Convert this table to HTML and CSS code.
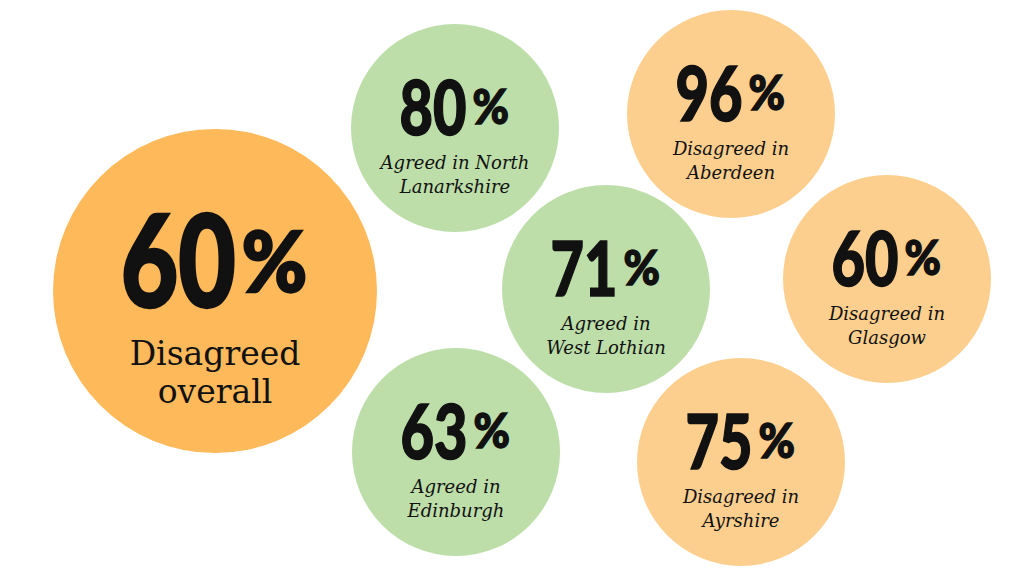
FILE: index.html
```html
<!DOCTYPE html>
<html lang="en">
<head>
<meta charset="utf-8">
<title>Survey results</title>
<link rel="stylesheet" href="styles.css">
</head>
<body>
<div class="stage">
  <div class="bubble big orange b-overall">
    <div class="num"><span class="digits">60</span><span class="pct">%</span></div>
    <div class="label label-big">Disagreed<br>overall</div>
  </div>

  <div class="bubble green b-north">
    <div class="num"><span class="digits">80</span><span class="pct">%</span></div>
    <div class="label">Agreed in North<br>Lanarkshire</div>
  </div>

  <div class="bubble peach b-aberdeen">
    <div class="num"><span class="digits">96</span><span class="pct">%</span></div>
    <div class="label">Disagreed in<br>Aberdeen</div>
  </div>

  <div class="bubble green b-west">
    <div class="num"><span class="digits">71</span><span class="pct">%</span></div>
    <div class="label">Agreed in<br>West Lothian</div>
  </div>

  <div class="bubble peach b-glasgow">
    <div class="num"><span class="digits">60</span><span class="pct">%</span></div>
    <div class="label">Disagreed in<br>Glasgow</div>
  </div>

  <div class="bubble green b-edinburgh">
    <div class="num"><span class="digits">63</span><span class="pct">%</span></div>
    <div class="label">Agreed in<br>Edinburgh</div>
  </div>

  <div class="bubble peach b-ayrshire">
    <div class="num"><span class="digits">75</span><span class="pct">%</span></div>
    <div class="label">Disagreed in<br>Ayrshire</div>
  </div>
</div>
</body>
</html>
```

FILE: styles.css
```css
html, body {
  margin: 0;
  padding: 0;
  background: #ffffff;
}

.stage {
  position: relative;
  width: 1024px;
  height: 576px;
  overflow: hidden;
  background: #ffffff;
  color: #111111;
}

.bubble {
  position: absolute;
  width: 208px;
  height: 208px;
  border-radius: 50%;
  display: flex;
  flex-direction: column;
  align-items: center;
  justify-content: center;
  text-align: center;
  box-sizing: border-box;
  padding-top: 10px;
}

.orange { background: #fdb95a; }
.peach  { background: #fccf8e; }
.green  { background: #bddea9; }

.big {
  width: 324px;
  height: 324px;
  padding-top: 23px;
}

.b-overall   { left: 53px;  top: 129px; }
.b-north     { left: 351px; top: 24px; }
.b-aberdeen  { left: 627px; top: 10px; }
.b-west      { left: 502px; top: 185px; }
.b-glasgow   { left: 783px; top: 175px; }
.b-edinburgh { left: 352px; top: 348px; }
.b-ayrshire  { left: 637px; top: 358px; }

.num {
  font-family: Lato, "DejaVu Sans", sans-serif;
  font-weight: 900;
  font-size: 76px;
  line-height: 1;
  white-space: nowrap;
  -webkit-text-stroke: 1.5px #111111;
}

.digits {
  display: inline-block;
  transform: scaleX(0.76);
  margin: 0 -0.14em;
}

.pct {
  display: inline-block;
  font-size: 0.63em;
  vertical-align: 0.23em;
  transform: scaleX(0.92);
  margin-left: 4px;
}

.big .num {
  font-size: 128px;
  -webkit-text-stroke: 2.5px #111111;
}

.big .digits {
  transform: scaleX(0.775);
  margin: 0 -0.13em;
}

.big .pct {
  font-size: 0.65em;
  vertical-align: 0.17em;
  transform: scaleX(0.95);
  margin-left: 4px;
}

.label {
  font-family: "DejaVu Serif", serif;
  font-style: italic;
  font-size: 18px;
  line-height: 24px;
  margin-top: 7px;
}

.label-big {
  font-style: normal;
  font-size: 33px;
  line-height: 38.5px;
  margin-top: 13px;
}
```
